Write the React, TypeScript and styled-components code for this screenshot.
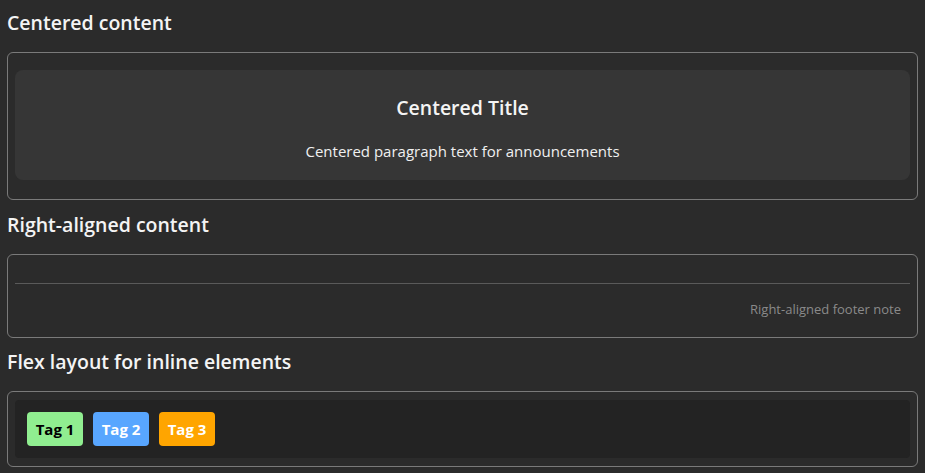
import React from "react";
import styled, { createGlobalStyle } from "styled-components";

const Global = createGlobalStyle`
  html, body { margin: 0; padding: 0; background: #2b2b2b; }
  body { font-family: "Open Sans", "Noto Sans", sans-serif; color: #f0f0f0; }
`;

const Page = styled.div`
  padding: 0 7px;
  display: flex;
  flex-direction: column;
`;

const Heading = styled.h2<{ $top: number }>`
  margin: 0 0 16px 0;
  font-size: 19.5px;
  font-weight: 600;
  line-height: 26px;
  color: #f4f4f4;
  padding-top: ${(p) => p.$top}px;
`;

const Box = styled.div<{ $pad: string }>`
  border: 1px solid #7a7a7a;
  border-radius: 6px;
  padding: ${(p) => p.$pad};
`;

const Card = styled.div`
  background: #363636;
  border-radius: 8px;
  height: 110px;
  display: flex;
  flex-direction: column;
  align-items: center;
  padding-top: 25px;
  box-sizing: border-box;
`;

const CardTitle = styled.div`
  font-size: 19.5px;
  font-weight: 600;
  line-height: 26px;
  color: #f4f4f4;
`;

const CardText = styled.div`
  margin-top: 20px;
  font-size: 15px;
  line-height: 20px;
  color: #f0f0f0;
`;

const Divider = styled.div`
  height: 1px;
  background: #5a5a5a;
  margin-top: 28px;
`;

const Footer = styled.div`
  text-align: right;
  font-size: 13px;
  line-height: 18px;
  color: #8a8a8a;
  padding: 16px 9px 0 0;
  height: 53px;
  box-sizing: border-box;
`;

const TagRow = styled.div`
  background: #232323;
  border-radius: 4px;
  display: flex;
  gap: 10px;
  padding: 12px;
`;

const Tag = styled.span<{ $bg: string; $fg: string }>`
  background: ${(p) => p.$bg};
  color: ${(p) => p.$fg};
  font-weight: 700;
  font-size: 15px;
  border-radius: 4px;
  width: 56px;
  height: 34px;
  display: flex;
  align-items: center;
  justify-content: center;
`;

export default function App() {
  return (
    <>
      <Global />
      <Page>
        <Heading $top={10}>Centered content</Heading>
        <Box $pad="17px 7px 19px 7px">
          <Card>
            <CardTitle>Centered Title</CardTitle>
            <CardText>Centered paragraph text for announcements</CardText>
          </Card>
        </Box>
        <Heading $top={12}>Right-aligned content</Heading>
        <Box $pad="0 7px 0 7px">
          <Divider />
          <Footer>Right-aligned footer note</Footer>
        </Box>
        <Heading $top={11}>Flex layout for inline elements</Heading>
        <Box $pad="8px 7px 8px 7px">
          <TagRow>
            <Tag $bg="#90ee90" $fg="#000">Tag 1</Tag>
            <Tag $bg="#58a6ff" $fg="#fff">Tag 2</Tag>
            <Tag $bg="#ffa500" $fg="#fff">Tag 3</Tag>
          </TagRow>
        </Box>
      </Page>
    </>
  );
}
